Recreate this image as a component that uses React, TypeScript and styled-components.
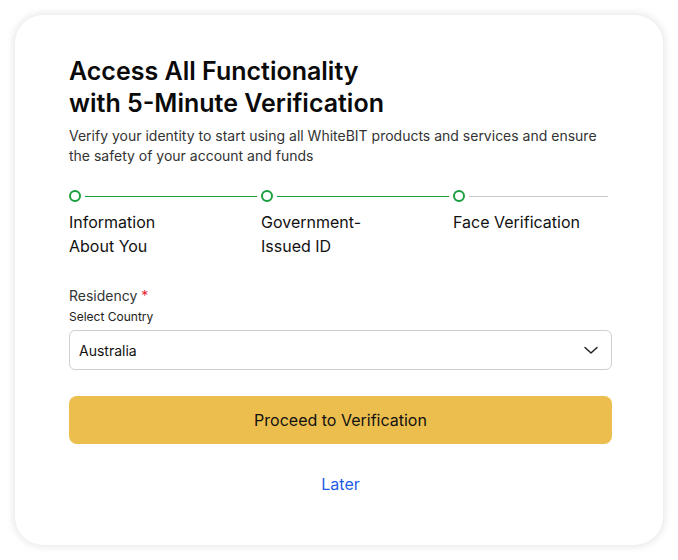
import React from 'react';
import styled, { createGlobalStyle } from 'styled-components';

const GlobalStyle = createGlobalStyle`
    html, body {
        margin: 0;
        padding: 0;
        background: #ffffff;
    }
    body {
        font-family: Inter, "Noto Sans", sans-serif;
        -webkit-font-smoothing: antialiased;
    }
`;

const Page = styled.div`
    width: 678px;
    height: 560px;
    padding: 15px;
    box-sizing: border-box;
`;

const Card = styled.div`
    width: 648px;
    height: 530px;
    box-sizing: border-box;
    background: #fff;
    border-radius: 28px;
    box-shadow: 0 0 10px rgba(0, 0, 0, 0.14);
    padding: 40px 51px 0 54px;
`;

const Title = styled.h1`
    margin: 0;
    font-size: 25px;
    line-height: 32px;
    font-weight: 600;
    color: #0a0a0a;
`;

const Subtitle = styled.p`
    margin: 7px 0 0;
    font-size: 14px;
    line-height: 20px;
    color: #333;
`;

const Steps = styled.div`
    display: grid;
    grid-template-columns: 192px 192px 1fr;
    margin-top: 24px;
`;

const Step = styled.div`
    display: flex;
    flex-direction: column;
`;

const Track = styled.div`
    display: flex;
    align-items: flex-start;
    height: 12px;
    gap: 4px;
`;

const Dot = styled.span`
    width: 12px;
    height: 12px;
    box-sizing: border-box;
    border: 2.5px solid #1a9f3c;
    border-radius: 50%;
    flex-shrink: 0;
`;

const Line = styled.span<{ $done: boolean }>`
    flex: 1;
    height: 1px;
    margin: 6px 4px 0 0;
    background: ${p => (p.$done ? '#1a9f3c' : '#c8c8c8')};
`;

const StepLabel = styled.div`
    margin-top: 8px;
    max-width: 132px;
    font-size: 16px;
    line-height: 24px;
    color: #111;
`;

const Field = styled.div`
    margin-top: 28px;
    display: flex;
    flex-direction: column;
`;

const Label = styled.div`
    font-size: 14px;
    line-height: 20px;
    color: #333;
`;

const Required = styled.span`
    color: #e5283a;
`;

const Hint = styled.div`
    margin-top: 3px;
    font-size: 12px;
    line-height: 16px;
    color: #222;
`;

const Select = styled.div`
    margin-top: 5px;
    height: 40px;
    box-sizing: border-box;
    border: 1px solid #cfcfcf;
    border-radius: 6px;
    display: flex;
    align-items: center;
    justify-content: space-between;
    padding: 0 12px 0 9px;
    font-size: 14px;
    color: #111;
`;

const Button = styled.button`
    margin-top: 26px;
    width: 100%;
    height: 48px;
    border: none;
    border-radius: 8px;
    background: #ebbe4e;
    color: #111;
    font-family: inherit;
    font-size: 16px;
    cursor: pointer;
`;

const Later = styled.a`
    display: block;
    margin-top: 28px;
    text-align: center;
    font-size: 16px;
    line-height: 24px;
    color: #1f5ce6;
    cursor: pointer;
`;

const steps = [
    { label: 'Information About You', done: true },
    { label: 'Government-Issued ID', done: true },
    { label: 'Face Verification', done: false },
];

const Chevron = () => (
    <svg width="16" height="16" viewBox="0 0 16 16" fill="none">
        <path d="M2 5.5l6 5.5 6-5.5" stroke="#222" strokeWidth="1.5" strokeLinecap="round" strokeLinejoin="round" />
    </svg>
);

export default function App() {
    return (
        <>
            <GlobalStyle />
            <Page>
                <Card>
                    <Title>
                        Access All Functionality
                        <br />
                        with 5-Minute Verification
                    </Title>
                    <Subtitle>
                        Verify your identity to start using all WhiteBIT products and services and ensure the safety of your
                        account and funds
                    </Subtitle>
                    <Steps>
                        {steps.map(s => (
                            <Step key={s.label}>
                                <Track>
                                    <Dot />
                                    <Line $done={s.done} />
                                </Track>
                                <StepLabel>{s.label}</StepLabel>
                            </Step>
                        ))}
                    </Steps>
                    <Field>
                        <Label>
                            Residency <Required>*</Required>
                        </Label>
                        <Hint>Select Country</Hint>
                        <Select>
                            <span>Australia</span>
                            <Chevron />
                        </Select>
                    </Field>
                    <Button>Proceed to Verification</Button>
                    <Later>Later</Later>
                </Card>
            </Page>
        </>
    );
}
